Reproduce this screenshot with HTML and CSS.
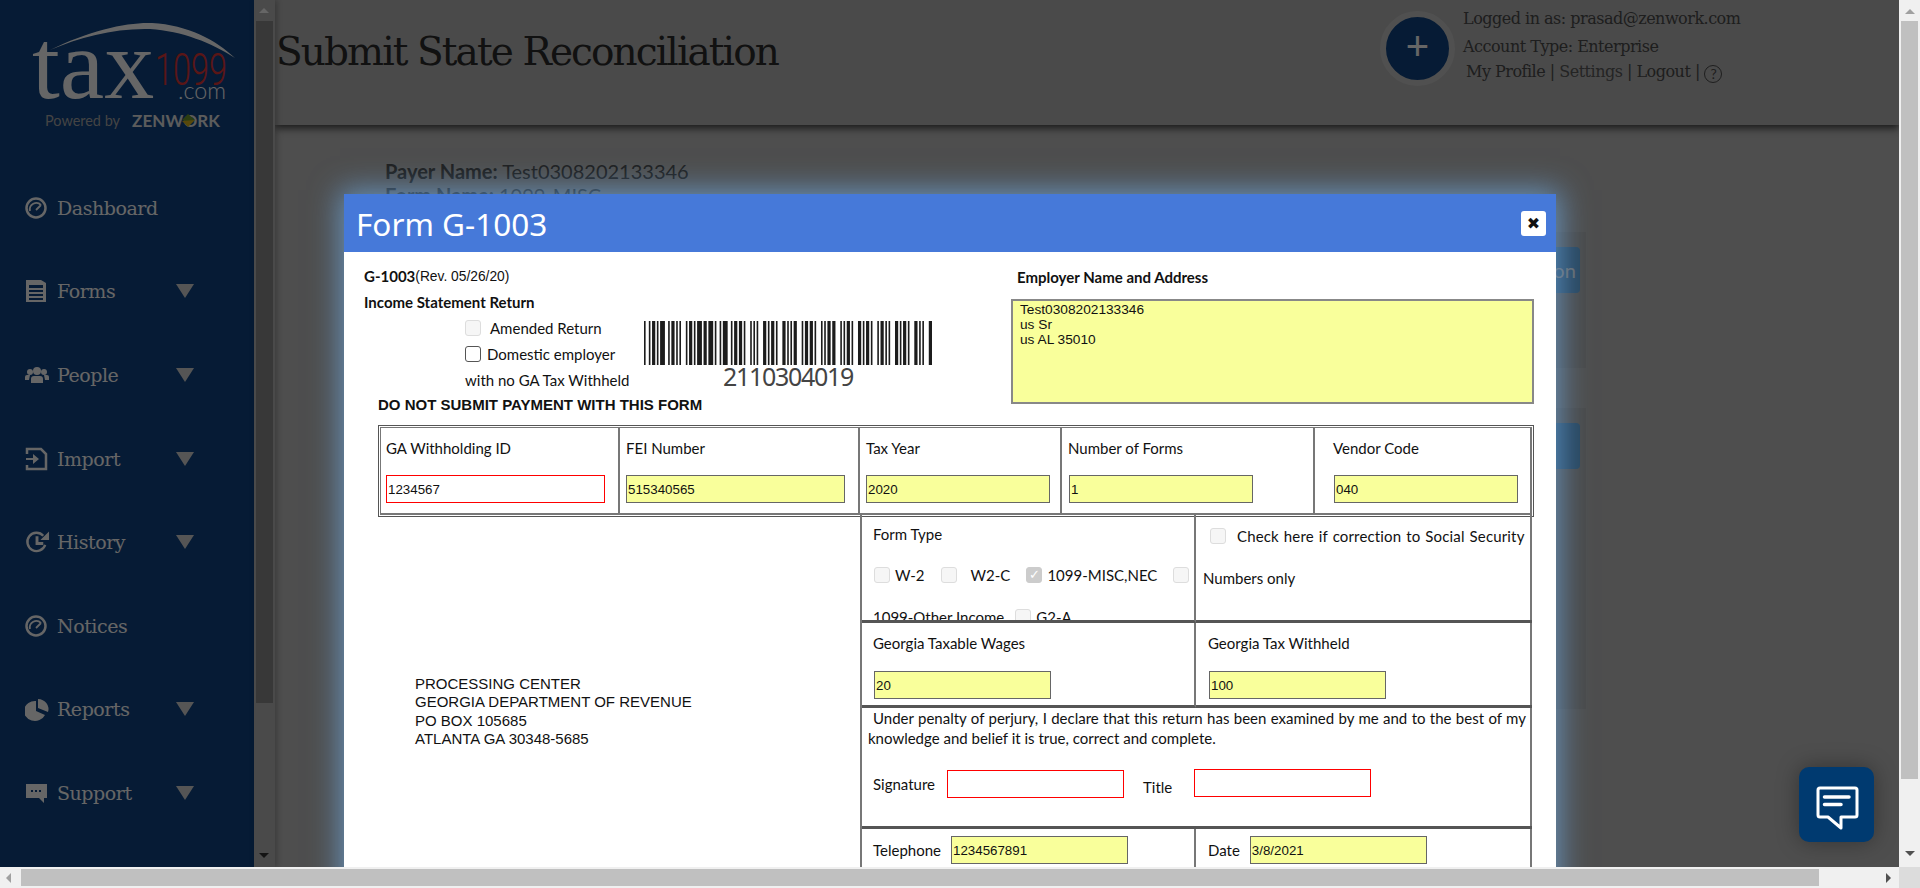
FILE: index.html
```html
<!DOCTYPE html>
<html lang="en">
<head>
<meta charset="UTF-8" />
<title>Submit State Reconciliation</title>
<link rel="stylesheet" href="styles.css">
</head>
<body>
<div class="viewport">
  <div class="app">

    <!-- Left navigation -->
    <aside class="sidebar">
      <div class="logo">
        <svg width="254" height="166" viewBox="0 0 254 166">
          <path class="logo-swoosh" d="M50 50C90 30 128 22 152 23C188 25 216 40 235 58C212 43 182 31 150 29C115 28 80 37 50 50Z"/>
          <text class="logo-tax" x="32" y="98">tax</text>
          <text class="logo-num" x="155" y="85" textLength="72" lengthAdjust="spacingAndGlyphs">1099</text>
          <text class="logo-com" x="178" y="99" textLength="48" lengthAdjust="spacingAndGlyphs">.com</text>
          <text class="logo-powered" x="45" y="126" textLength="75" lengthAdjust="spacingAndGlyphs">Powered by</text>
          <text class="logo-zen" x="132" y="127" textLength="88">ZENWORK</text>
          <path class="logo-mark-a" d="M182 120l6-6 7 6-7 2z"/>
          <path class="logo-mark-b" d="M182 121l13-1-7 7z"/>
        </svg>
      </div>
      <nav class="nav">
        <a class="nav-item">
          <svg class="nav-icon" viewBox="0 0 24 24"><circle class="ic-line" cx="11" cy="12" r="9.500"/><path class="ic-thin" d="M5 15a6.500 6.500 0 0 1 11-6M11 14l5-5"/></svg>
          <span class="nav-label">Dashboard</span>
        </a>
        <a class="nav-item">
          <svg class="nav-icon" viewBox="0 0 24 24"><path class="ic-fill" d="M1 1h15l5 3v19H1zM4 6v3h14V6zM4 11v2h14v-2zM4 15v2h14v-2zM4 19v2h14v-2z" fill-rule="evenodd"/></svg>
          <span class="nav-label">Forms</span>
          <i class="nav-caret"></i>
        </a>
        <a class="nav-item">
          <svg class="nav-icon" viewBox="0 0 24 24"><circle class="ic-fill" cx="12" cy="8" r="4"/><circle class="ic-fill" cx="5" cy="9" r="3"/><circle class="ic-fill" cx="19" cy="9" r="3"/><path class="ic-fill" d="M6 20v-4q0-3 3-3h6q3 0 3 3v4zM0 17v-3q0-2 2-2h3l-1 5zM24 17v-3q0-2-2-2h-3l1 5z"/></svg>
          <span class="nav-label">People</span>
          <i class="nav-caret"></i>
        </a>
        <a class="nav-item">
          <svg class="nav-icon" viewBox="0 0 24 24"><path class="ic-line" d="M2 7V2h14l5 5v15H2v-4"/><path class="ic-fill" d="M1 11h7V7l6 5-6 5v-4H1z"/></svg>
          <span class="nav-label">Import</span>
          <i class="nav-caret"></i>
        </a>
        <a class="nav-item">
          <svg class="nav-icon nav-icon-wide" viewBox="0 0 26 24"><path class="ic-line" d="M21 15A9.500 9.500 0 1 1 19 5.500"/><path class="ic-fill" d="M25 1v9h-9zM11 6h3v6h5v3h-8z"/></svg>
          <span class="nav-label">History</span>
          <i class="nav-caret"></i>
        </a>
        <a class="nav-item">
          <svg class="nav-icon" viewBox="0 0 24 24"><circle class="ic-line" cx="11" cy="12" r="9.500"/><path class="ic-thin" d="M5 15a6.500 6.500 0 0 1 11-6M11 14l5-5"/></svg>
          <span class="nav-label">Notices</span>
        </a>
        <a class="nav-item">
          <svg class="nav-icon" viewBox="0 0 24 24"><path class="ic-fill" d="M11 4v10l9 4A11 10 0 1 1 11 4zM13 2a11 10 0 0 1 10 13l-10-4z"/></svg>
          <span class="nav-label">Reports</span>
          <i class="nav-caret"></i>
        </a>
        <a class="nav-item">
          <svg class="nav-icon" viewBox="0 0 24 24"><path class="ic-fill" d="M1 3h21v14h-3v5l-5-5H1zM6 9v2h2V9zM10 9v2h2V9zM14 9v2h2V9z" fill-rule="evenodd"/></svg>
          <span class="nav-label">Support</span>
          <i class="nav-caret"></i>
        </a>
      </nav>
    </aside>

    <div class="side-scroll">
      <i class="arrow arrow-up side-arrow-up"></i>
      <div class="side-thumb"></div>
      <i class="arrow arrow-down side-arrow-down"></i>
    </div>

    <!-- Page behind the dialog -->
    <main class="main">
      <header class="topbar">
        <h1 class="page-title">Submit State Reconciliation</h1>
        <div class="account">
          <div class="add-btn">+</div>
          <div class="account-text">
            <div class="account-line">Logged in as: prasad@zenwork.com</div>
            <div class="account-line account-type">Account Type: Enterprise</div>
            <div class="account-line account-links">My Profile | <span class="muted">Settings</span> | Logout | <span class="help">?</span></div>
          </div>
        </div>
      </header>
      <section class="page-body">
        <div class="payer-info">
          <p><b>Payer Name:</b> Test0308202133346</p>
          <p><b>Form Name:</b> 1099-MISC</p>
        </div>
        <div class="panel panel-top"><span class="panel-btn">Reconciliation</span></div>
        <div class="panel panel-bottom"><span class="panel-btn"></span></div>
      </section>
    </main>

    <!-- Dialog -->
    <div class="overlay">
      <div class="modal">
        <div class="modal-head">
          <h2 class="modal-title">Form G-1003</h2>
          <span class="modal-close">&#10006;</span>
        </div>
        <div class="form-head">
          <div class="head-main">
            <div class="intro">
              <div class="intro-text">
                <div class="line"><b>G-1003</b><span class="rev">(Rev. 05/26/20)</span></div>
                <div class="line"><b>Income Statement Return</b></div>
                <div class="intro-checks">
                  <div class="line"><input type="checkbox" class="box" disabled><span class="amended">Amended Return</span></div>
                  <div class="line"><input type="checkbox" class="box box-on"><span class="domestic">Domestic employer</span></div>
                  <div class="line">with no GA Tax Withheld</div>
                </div>
              </div>
              <div class="barcode">
                <svg class="bars" id="bars" width="288" height="44" viewBox="0 0 288 44"></svg>
                <div class="barcode-num">2110304019</div>
              </div>
            </div>
            <div class="notice">DO NOT SUBMIT PAYMENT WITH THIS FORM</div>
          </div>
          <div class="employer">
            <div class="employer-label">Employer Name and Address</div>
            <textarea class="employer-box" readonly>Test0308202133346
us Sr
us AL 35010</textarea>
          </div>
        </div>

        <div class="id-row">
          <div class="id-cell">
            <label>GA Withholding ID</label>
            <input class="field field-req w-219" value="1234567">
          </div>
          <div class="id-cell">
            <label>FEI Number</label>
            <input class="field w-219" value="515340565">
          </div>
          <div class="id-cell">
            <label>Tax Year</label>
            <input class="field w-184" value="2020">
          </div>
          <div class="id-cell">
            <label>Number of Forms</label>
            <input class="field w-184 nudge" value="1">
          </div>
          <div class="id-cell id-cell-vendor">
            <label>Vendor Code</label>
            <input class="field w-184 nudge" value="040">
          </div>
        </div>

        <div class="lower">
          <div class="address">
            PROCESSING CENTER<br>
            GEORGIA DEPARTMENT OF REVENUE<br>
            PO BOX 105685<br>
            ATLANTA GA 30348-5685
          </div>
          <div class="details">
            <div class="cell cell-left cell-type">
              <div class="type-title">Form Type</div>
              <div class="type-row">
                <input type="checkbox" class="box" disabled><span>W-2</span>
                <input type="checkbox" class="box gap-l" disabled><span class="gap-w2c">W2-C</span>
                <input type="checkbox" class="box gap-l" checked disabled><span>1099-MISC,NEC</span>
                <input type="checkbox" class="box gap-l" disabled>
              </div>
              <div class="type-row type-row-last">
                <span>1099-Other Income</span>
                <input type="checkbox" class="box gap-s" disabled><span>G2-A</span>
              </div>
            </div>
            <div class="cell cell-correction">
              <div class="correction-line"><input type="checkbox" class="box" disabled><span>Check here if correction to Social Security</span></div>
              <div class="correction-more">Numbers only</div>
            </div>
            <div class="cell cell-left cell-money">
              <label>Georgia Taxable Wages</label>
              <input class="field w-177" value="20">
            </div>
            <div class="cell cell-money cell-right">
              <label>Georgia Tax Withheld</label>
              <input class="field w-177" value="100">
            </div>
            <div class="cell cell-wide">
              <p class="perjury">Under penalty of perjury, I declare that this return has been examined by me and to the best of my knowledge and belief it is true, correct and complete.</p>
              <div class="sign-row">
                <label>Signature</label>
                <input class="field field-req w-177 sign-input">
                <label class="title-label">Title</label>
                <input class="field field-req w-177 title-input">
              </div>
            </div>
            <div class="cell cell-left cell-contact">
              <label>Telephone</label>
              <input class="field w-177" value="1234567891">
            </div>
            <div class="cell cell-contact cell-right">
              <label>Date</label>
              <input class="field w-177" value="3/8/2021">
            </div>
          </div>
        </div>
      </div>
    </div>

    <!-- Chat launcher -->
    <button class="chat-btn" title="Chat">
      <svg width="75" height="75" viewBox="0 0 75 75">
        <path class="chat-bubble" d="M21 21h35a2 2 0 0 1 2 2v25a2 2 0 0 1-2 2H42v11L29 50h-8a2 2 0 0 1-2-2V23a2 2 0 0 1 2-2z"/>
        <path class="chat-lines" d="M25.500 30H50M25.500 37.500H42"/>
      </svg>
    </button>
  </div>

  <div class="vscroll">
    <i class="arrow arrow-up"></i>
    <div class="vthumb"></div>
    <i class="arrow arrow-down"></i>
  </div>
  <div class="hscroll">
    <i class="arrow arrow-left"></i>
    <div class="hthumb"></div>
    <i class="arrow arrow-right"></i>
  </div>
  <div class="corner"></div>
</div>

<script>
  // Barcode bars, widths in px: bar, space, bar, space...
  const pattern = [1,2,1,1,2,1,1,1,3,2,1,1,2,1,1,1,1,3,1,1,2,1,1,1,3,1,2,1,3,1,1,2,1,1,3,2,1,1,2,1,2,1,1,3,1,1,1,1,1,3,2,1,1,1,2,1,1,3,2,1,1,1,1,1,2,3,1,1,2,1,2,1,1,3,1,1,1,1,2,1,2,3,1,1,1,1,2,1,1,3,2,1,1,1,2,1,1,3,1,1,2,1,1,1,1,3,2,1,1,1,2,1,1,3,2,1,1,1,1,3,2];
  const bars = document.getElementById('bars');
  let x = 0, out = '';
  pattern.forEach((w, i) => {
    if (i % 2 === 0) out += `<rect x="${x}" y="0" width="${w}" height="44"/>`;
    x += w;
  });
  bars.setAttribute('viewBox', `0 0 ${x} 44`);
  bars.setAttribute('preserveAspectRatio', 'none');
  bars.innerHTML = out;
</script>
</body>
</html>
```

FILE: styles.css
```css
* { box-sizing: border-box; }
body {
  margin: 0;
  height: 888px;
  overflow: hidden;
  background: #f0f0f0;
  font-family: "Lato", sans-serif;
}
.viewport {
  display: grid;
  grid-template-columns: 1fr 21px;
  grid-template-rows: 1fr 21px;
  width: 1920px;
  height: 888px;
}
.app {
  position: relative;
  display: flex;
  overflow: hidden;
  background: #c3c3c3;
}

/* Sidebar */
.sidebar {
  width: 254px;
  flex: none;
  background: #0f4484;
  color: #fff;
  overflow: hidden;
}
.logo { height: 166px; }
.logo svg { display: block; }
.logo-swoosh { fill: #fff; }
.logo-tax { font: 100px "Liberation Serif", serif; fill: #fff; }
.logo-num { font: 300 44px "Roboto", sans-serif; fill: #e13737; }
.logo-com { font: 300 23px "Lato", sans-serif; fill: #fff; }
.logo-powered { font: 16px "Lato", sans-serif; fill: #aaa; }
.logo-zen { font: bold 17px "Lato", sans-serif; fill: #e6e6e6; }
.logo-mark-a { fill: #6f9a2c; }
.logo-mark-b { fill: #d9b51e; }

.nav-item {
  display: flex;
  align-items: center;
  height: 83.6px;
  padding-left: 25px;
}
.nav-icon { width: 24px; height: 24px; flex: none; margin-right: 8px; }
.nav-icon-wide { width: 25px; margin-right: 7px; }
.ic-fill { fill: #fff; }
.ic-line { fill: none; stroke: #fff; stroke-width: 2.5; }
.ic-thin { fill: none; stroke: #fff; stroke-width: 1.800; }
.nav-label {
  width: 119px;
  font: 19px "DejaVu Serif", serif;
  letter-spacing: -0.45px;
}
.nav-caret {
  width: 0;
  height: 0;
  border-left: 9.500px solid transparent;
  border-right: 9.500px solid transparent;
  border-top: 14px solid #d5d5d5;
}

.side-scroll {
  position: relative;
  width: 21px;
  flex: none;
  background: #b9b9b9;
  box-shadow: 2px 0 6px rgba(0,0,0,.25);
}
.side-thumb {
  position: absolute;
  top: 21px;
  left: 2px;
  width: 17px;
  height: 682px;
  background: #8c8c8c;
}
.side-arrow-up { position: absolute; top: 8px; left: 5px; border-bottom-color: #fff !important; }
.side-arrow-down { position: absolute; bottom: 9px; left: 5px; border-top-color: #333 !important; }

/* Page behind the dialog */
.main { flex: 1; min-width: 0; }
.topbar {
  display: flex;
  height: 125px;
  background: #b9b9b9;
  box-shadow: 0 3px 8px rgba(0,0,0,.7);
}
.page-title {
  width: 1105px;
  margin: 0;
  padding: 25px 0 0 1px;
  font: 400 39px/54px "DejaVu Serif", serif;
  letter-spacing: -1.900px;
  color: #2b2b2b;
}
.account { display: flex; }
.add-btn {
  width: 75px;
  height: 75px;
  margin-top: 11px;
  border: 6px solid #c8c8c8;
  border-radius: 50%;
  background: #0f4484;
  color: #fff;
  font: 40px/58px "Liberation Sans", sans-serif;
  text-align: center;
}
.account-text {
  padding: 8px 0 0 8px;
  font: 16px/22px "DejaVu Serif", serif;
  letter-spacing: -0.500px;
  color: #4b4b4b;
}
.account-type { margin-top: 6px; }
.account-links { margin-top: 3px; padding-left: 3px; }
.muted { color: #5a5a5a; }
.help {
  display: inline-block;
  width: 18px;
  height: 18px;
  border: 1px solid #4b4b4b;
  border-radius: 50%;
  font: 14px/16px "Lato", sans-serif;
  text-align: center;
  vertical-align: -2px;
}
.page-body { padding: 34px 0 0 110px; }
.payer-info {
  height: 73px;
  font-size: 20px;
  line-height: 24px;
  color: #4b4b4b;
}
.payer-info p { margin: 0; }
.panel {
  display: flex;
  justify-content: flex-end;
  width: 1201px;
  padding: 15px 6px 0 0;
  background: #b9b9b9;
}
.panel-top { height: 136px; }
.panel-bottom { height: 301px; margin-top: 40px; }
.panel-btn {
  width: 140px;
  height: 46px;
  padding: 0 13px;
  border-radius: 4px;
  background: #66aeea;
  color: #fff;
  font-size: 20px;
  line-height: 46px;
  text-align: right;
}

/* Dialog */
.overlay {
  position: absolute;
  inset: 0;
  padding: 194px 0 0 344px;
  background: rgba(0,0,0,.6);
  overflow: hidden;
}
.modal {
  width: 1212px;
  height: 760px;
  background: #fff;
  color: #111;
  box-shadow: 0 0 28px 4px rgba(120,190,255,.6);
}
.modal-head {
  display: flex;
  align-items: center;
  justify-content: space-between;
  height: 58px;
  padding: 0 10px 0 12px;
  background: #4679d9;
}
.modal-title {
  margin: 0;
  font: 400 31.500px "Noto Sans", sans-serif;
  color: #fff;
}
.modal-close {
  width: 25px;
  height: 25px;
  border-radius: 3px;
  background: #fff;
  color: #111;
  font: 16px/25px "DejaVu Sans", sans-serif;
  text-align: center;
}

.form-head { display: flex; height: 173px; }
.head-main { width: 667px; padding: 11px 0 0 20px; }
.intro { display: flex; height: 130px; }
.intro-text { width: 280px; flex: none; }
.line {
  display: flex;
  align-items: center;
  height: 26px;
  font-size: 15px;
  white-space: nowrap;
}
.rev { font: 13.800px "Liberation Sans", sans-serif; }
.intro-checks { padding-left: 101px; }
.amended { margin-left: 9px; }
.domestic { margin-left: 6px; }
.box {
  appearance: none;
  position: relative;
  width: 16px;
  height: 16px;
  margin: 0;
  flex: none;
  border: 1px solid #ddd;
  border-radius: 3px;
  background: #f6f6f6;
}
.box-on { border-color: #555; background: #fff; }
.box:checked { background: #ccc; border-color: #ccc; }
.box:checked::after {
  content: "\2713";
  position: absolute;
  inset: 0;
  color: #fff;
  font: bold 13px/14px "DejaVu Sans", sans-serif;
  text-align: center;
}
.barcode { width: 288px; margin-top: 58px; text-align: center; }
.bars { display: block; fill: #1c1c1c; }
.barcode-num {
  margin-top: -1px;
  font: 25px/24px "Noto Sans", sans-serif;
  letter-spacing: -1.300px;
  color: #444;
}
.notice {
  margin: -1px 0 0 14px;
  font: bold 15px/26px "Liberation Sans", sans-serif;
  white-space: nowrap;
}
.employer { flex: 1; }
.employer-label {
  margin: 15px 0 0 6px;
  font-size: 15px;
  font-weight: bold;
  line-height: 20px;
}
.employer-box {
  display: block;
  width: 523px;
  height: 105px;
  margin-top: 12px;
  padding: 1px 7px;
  border: 2px solid #888;
  border-radius: 0;
  background: #f9ff9b;
  color: #111;
  font: 13.700px/15px "Liberation Sans", sans-serif;
  resize: none;
  overflow: hidden;
  outline: none;
}

.field {
  display: block;
  height: 28px;
  padding: 1px;
  border: 1px solid #666;
  border-radius: 0;
  background: #f9ff9b;
  color: #111;
  font: 13.333px "Liberation Sans", sans-serif;
  outline: none;
}
.field-req { border-color: #f00; background: #fff; }
.w-219 { width: 219px; }
.w-184 { width: 184px; }
.w-177 { width: 177px; }
.nudge { margin-left: 1px; }

.id-row {
  display: grid;
  grid-template-columns: 240px 240px 202px 253px 217px;
  width: 1156px;
  height: 92px;
  margin-left: 34px;
  padding: 1px;
  border: 1px solid #555;
}
.id-cell {
  padding: 10px 0 0 6px;
  border: solid #777;
  border-width: 1px 2px 2px 0;
}
.id-cell:first-child { border-left: 1px solid #777; padding-left: 5px; }
.id-cell-vendor { padding-left: 18px; }
.id-cell label, .cell label {
  display: block;
  font-size: 15px;
  line-height: 20px;
}
.id-cell .field { margin-top: 17px; }

.lower { display: flex; margin: -4px 0 0 34px; }
.address {
  width: 482px;
  padding: 162px 0 0 37px;
  font: 15px/18.300px "Liberation Sans", sans-serif;
  color: #111;
}
.details {
  display: grid;
  grid-template-columns: 334px 336px;
  grid-template-rows: 110px 85px 121px 60px;
  width: 672px;
  border: solid #777;
  border-width: 0 2px 0 2px;
}
.cell { overflow: hidden; border-bottom: 3px solid #555; font-size: 15px; }
.cell-left { border-right: 2px solid #777; }
.cell-type { padding: 11px 0 0 11px; }
.type-title { line-height: 20px; }
.type-row {
  display: flex;
  align-items: center;
  gap: 5px;
  height: 20px;
  margin-top: 21px;
  white-space: nowrap;
}
.type-row .box:first-child { margin-left: 1px; }
.type-row-last { margin-top: 22px; }
.gap-l { margin-left: 11px; }
.gap-s { margin-left: 6px; }
.gap-w2c { margin-left: 9px; }
.cell-correction { padding: 13px 0 0 7px; }
.correction-line {
  display: flex;
  align-items: center;
  gap: 11px;
  padding-left: 7px;
  height: 20px;
  word-spacing: 1px;
  letter-spacing: .15px;
  white-space: nowrap;
}
.correction-more { margin-top: 22px; line-height: 20px; }
.cell-money { padding: 10px 0 0 11px; }
.cell-money .field { margin: 18px 0 0 1px; }
.cell-wide {
  grid-column: 1 / 3;
  padding: 0 6px 0 6px;
}
.perjury { margin: 0; text-indent: 5px; line-height: 20px; text-align: justify; }
.sign-row { display: flex; align-items: center; margin-top: 22px; padding-left: 5px; }
.sign-input { margin-left: 12px; }
.title-label { margin: 6px 0 0 19px; }
.title-input { margin: -2px 0 0 22px; }
.cell-contact {
  display: flex;
  align-items: flex-start;
  padding: 7px 0 0 11px;
  border-bottom: none;
}
.cell-contact label { line-height: 28px; }
.cell-contact .field { margin-left: 10px; }
.cell-right { padding-left: 12px; }

/* Chat launcher */
.chat-btn {
  position: absolute;
  right: 25px;
  bottom: 25px;
  width: 75px;
  height: 75px;
  padding: 0;
  border: none;
  border-radius: 10px;
  background: #003a70;
  box-shadow: 0 0 22px rgba(0,0,0,.35);
}
.chat-btn svg { display: block; }
.chat-bubble { fill: none; stroke: #fff; stroke-width: 3; stroke-linejoin: round; }
.chat-lines { fill: none; stroke: #fff; stroke-width: 3.500; stroke-linecap: round; }

/* Browser scrollbars */
.arrow { display: block; width: 0; height: 0; border: solid transparent; }
.arrow-up { border-width: 0 5px 5px; border-bottom-color: #a0a0a0; }
.arrow-down { border-width: 5px 5px 0; border-top-color: #505050; }
.arrow-left { border-width: 5px 5px 5px 0; border-right-color: #a0a0a0; }
.arrow-right { border-width: 5px 0 5px 5px; border-left-color: #505050; }
.vscroll {
  display: flex;
  flex-direction: column;
  align-items: center;
  background: #f0f0f0;
}
.vscroll .arrow-up { margin: 9px 0 7px; }
.vthumb { width: 17px; height: 758px; background: #c0c0c0; }
.vscroll .arrow-down { margin-top: 72px; }
.hscroll {
  display: flex;
  align-items: center;
  background: #f0f0f0;
}
.hscroll .arrow-left { margin: 0 6px 0 6px; }
.hthumb { width: 1798px; height: 17px; margin-left: 4px; background: #c0c0c0; }
.hscroll .arrow-right { margin-left: 67px; }
.corner { background: #dcdcdc; }
```
